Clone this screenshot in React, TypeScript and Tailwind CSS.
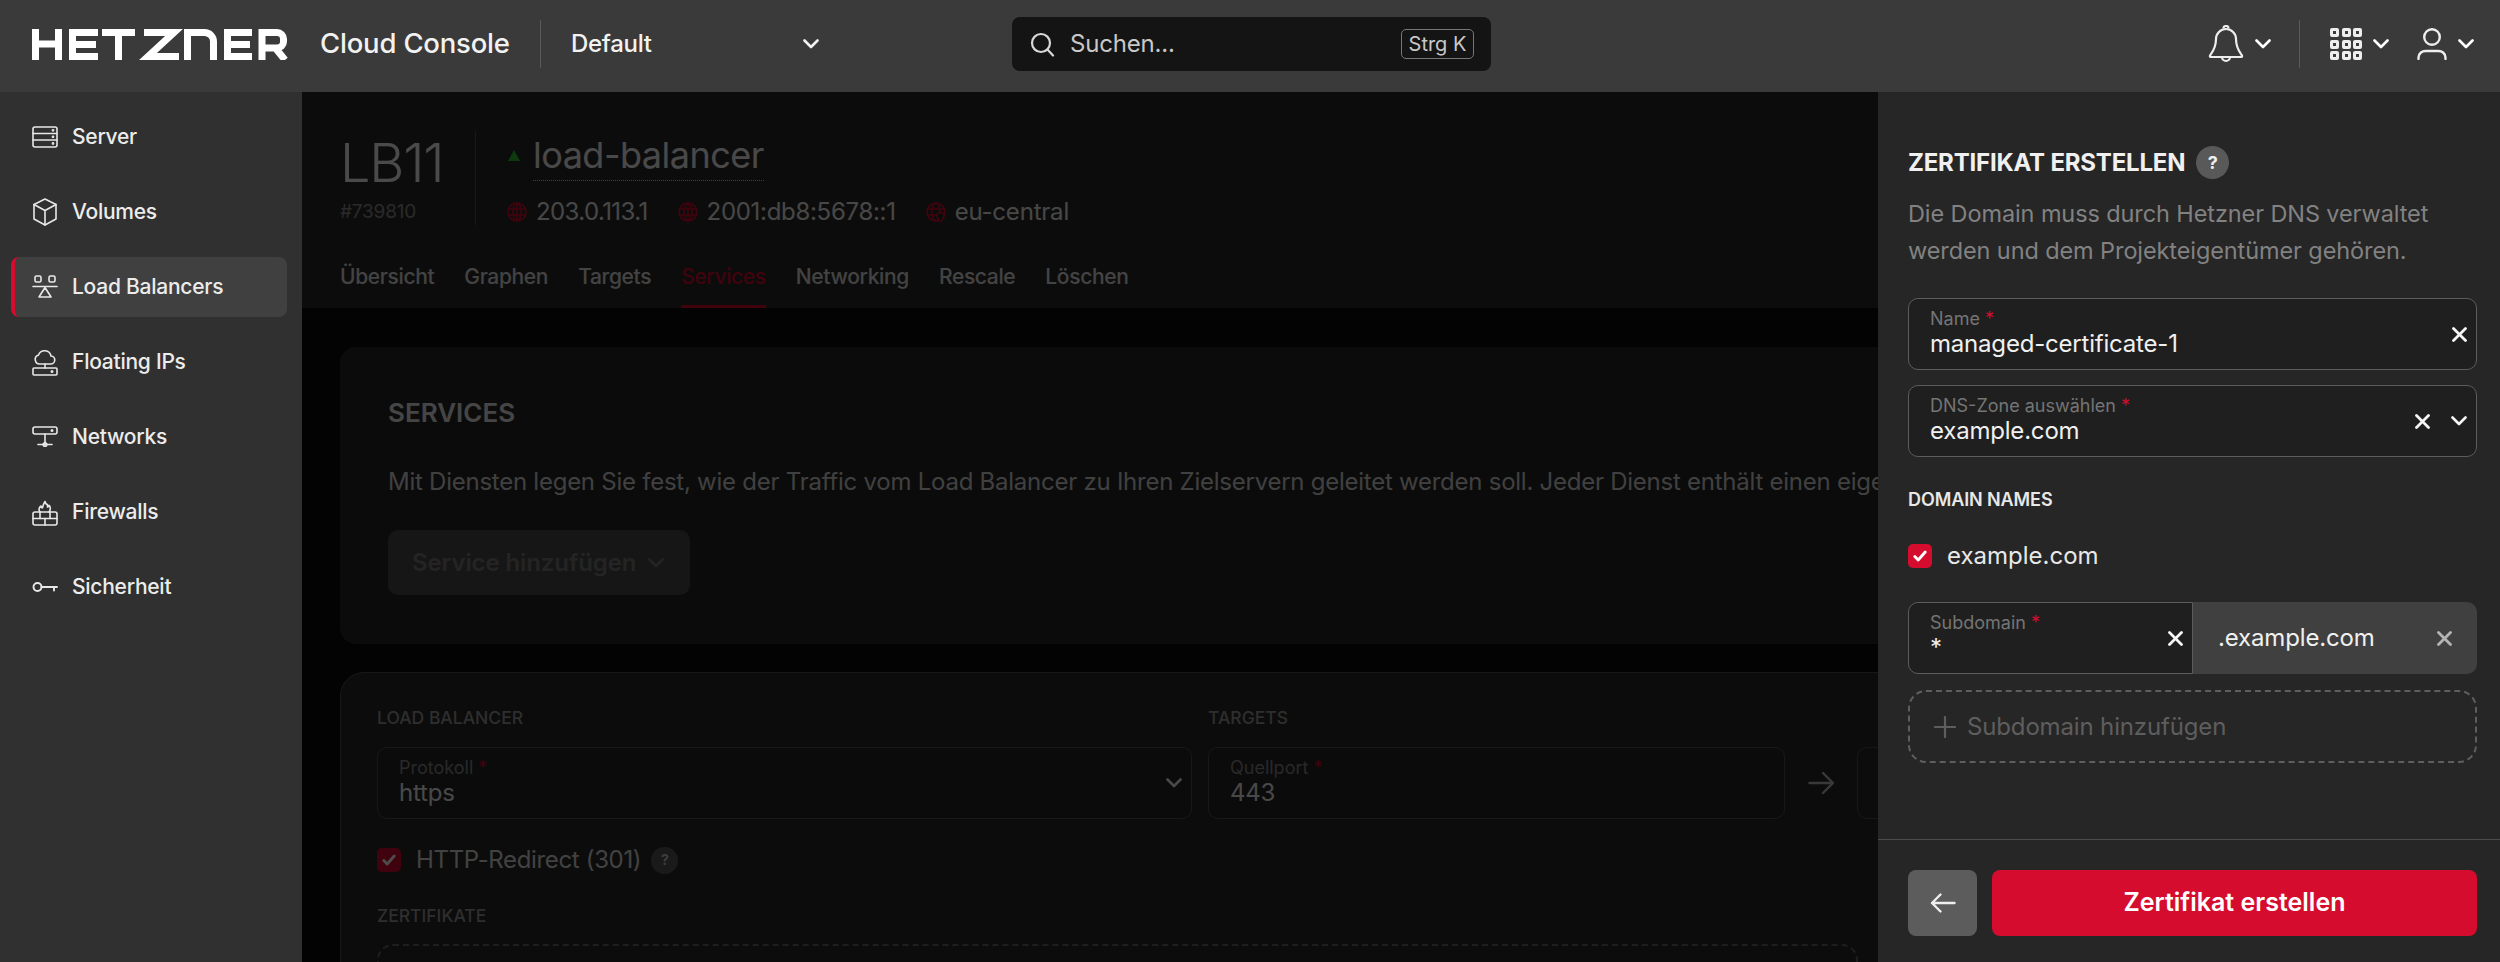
import type { ReactNode } from 'react';

const FONT = 'font-["Inter","Liberation_Sans",sans-serif]';

function Chevron({ className = '' }: { className?: string }) {
  return (
    <svg width="16" height="10" viewBox="0 0 16 10" fill="none" stroke="currentColor" strokeWidth="2.6" strokeLinecap="round" strokeLinejoin="round" className={className}>
      <polyline points="1.5,1.5 8,8 14.5,1.5" />
    </svg>
  );
}

function Cross({ className = '' }: { className?: string }) {
  return (
    <svg width="15" height="15" viewBox="0 0 15 15" fill="none" stroke="currentColor" strokeWidth="2.8" strokeLinecap="round" className={className}>
      <line x1="1.5" y1="1.5" x2="13.5" y2="13.5" />
      <line x1="13.5" y1="1.5" x2="1.5" y2="13.5" />
    </svg>
  );
}

function Check() {
  return (
    <svg width="14" height="12" viewBox="0 0 14 12" fill="none" stroke="currentColor" strokeWidth="2.8" strokeLinecap="round" strokeLinejoin="round">
      <polyline points="1.8,6.5 5.2,10 12.2,2" />
    </svg>
  );
}

function Globe({ pin = false }: { pin?: boolean }) {
  return (
    <svg width="20" height="20" viewBox="0 0 20 20" fill="none" stroke="#d50c2d" strokeWidth="1.6">
      <circle cx="10" cy="10" r="9" />
      <ellipse cx="10" cy="10" rx="4" ry="9" />
      <line x1="1" y1="7" x2="19" y2="7" />
      <line x1="1" y1="13" x2="19" y2="13" />
      {!pin && <line x1="10" y1="1" x2="10" y2="19" />}
      {pin && <path d="M14.5 20c-2-2.500-3.500-4-3.500-6a3.500 3.500 0 017 0c0 2-1.500 3.500-3.500 6z" fill="#262626" />}
    </svg>
  );
}

function NavIcon({ name }: { name: string }) {
  const common = { width: 26, height: 30, viewBox: '0 0 26 30', fill: 'none', stroke: '#e8e8e8', strokeWidth: 1.6, strokeLinejoin: 'round' as const, strokeLinecap: 'round' as const };
  if (name === 'server') {
    return (
      <svg {...common}>
        <rect x="1" y="5" width="24" height="20" rx="2" />
        <line x1="1" y1="11.500" x2="25" y2="11.500" />
        <line x1="1" y1="18" x2="25" y2="18" />
        <circle cx="21" cy="8.300" r=".6" />
        <circle cx="21" cy="14.800" r=".6" />
        <circle cx="21" cy="21.500" r=".6" />
      </svg>
    );
  }
  if (name === 'volume') {
    return (
      <svg {...common}>
        <path d="M13 2l11 5.500v14.500l-11 6-11-6V7.500z" />
        <path d="M2 7.500l11 6 11-6M13 13.500v14.500" />
      </svg>
    );
  }
  if (name === 'lb') {
    return (
      <svg {...common}>
        <rect x="3" y="4" width="6" height="6" rx="1.500" />
        <rect x="17" y="4" width="6" height="6" rx="1.500" />
        <line x1="1" y1="14.500" x2="25" y2="14.500" />
        <path d="M13 15.500l6 9.500H7z" />
      </svg>
    );
  }
  if (name === 'floating') {
    return (
      <svg {...common}>
        <path d="M8 17h10.500a4 4 0 00.500-8 6.500 6.500 0 00-12.500-1 4.600 4.600 0 001.500 9z" />
        <line x1="13" y1="17" x2="13" y2="21" />
        <rect x="1" y="21" width="24" height="7" rx="1" />
        <circle cx="20" cy="24.500" r=".7" />
      </svg>
    );
  }
  if (name === 'network') {
    return (
      <svg {...common}>
        <rect x="1" y="5" width="24" height="7" rx="2" />
        <circle cx="20" cy="8.500" r=".7" />
        <line x1="13" y1="12" x2="13" y2="23" />
        <line x1="6" y1="22.500" x2="20" y2="22.500" />
        <circle cx="13" cy="22.500" r="1.800" />
      </svg>
    );
  }
  if (name === 'firewall') {
    return (
      <svg {...common}>
        <path d="M8 15c-2-2.500-.5-5 1-6 0 1 .8 1.800 1.500 1.800C11 8.500 12 6 13 4.500c.5 2 1.500 3 2.500 3 .2 1 .2 1.800 0 2.500 1-.5 1.500-1 1.800-1.500 1.200 1.800 1.200 4.500-.3 6.500" />
        <rect x="1" y="15" width="24" height="13" rx="2" />
        <line x1="1" y1="21.500" x2="25" y2="21.500" />
        <line x1="13" y1="21.500" x2="13" y2="28" />
        <line x1="8" y1="15" x2="8" y2="21.500" />
        <line x1="18" y1="15" x2="18" y2="21.500" />
      </svg>
    );
  }
  return (
    <svg {...common}>
      <circle cx="5.500" cy="15" r="4" strokeWidth="1.900" />
      <path d="M9.500 15H25M22 15v3.500" strokeWidth="1.900" />
    </svg>
  );
}

function Logo() {
  return (
    <svg width="257" height="31" viewBox="0 0 257 31" fill="none" stroke="#ffffff" strokeWidth="7">
      <path d="M3.500 0v31M26.500 0v31M3.500 15h23" />
      <path d="M66 3.500H40.500v24H66M40.500 15.500H64" />
      <path d="M70 3.500h33M86.500 3.500V31" />
      <path d="M112 3.500h30l-26 24h31" />
      <path d="M155.500 31V3.500h17a9 9 0 019 9V31" />
      <path d="M220 3.500h-24.500v24H220M195.500 15.500H218" />
      <path d="M230 31V3.500h15a6.500 6.500 0 016.500 6.500v2.500a6.500 6.500 0 01-6.500 6.500H230M243 18.500l10 12.500" />
    </svg>
  );
}

function Field({ label, value, tone = 'bright', trailing, className = '' }: { label: string; value: string; tone?: 'bright' | 'dim'; trailing?: ReactNode; className?: string }) {
  return (
    <div className={`relative h-[72px] pl-[21px] pt-[9px] border ${tone === 'bright' ? 'bg-[#1f1f1f] border-[#5c5c5c]' : 'bg-[#262626] border-[#505050]'} ${className}`}>
      <div className={`text-[18px] leading-[22px] ${tone === 'bright' ? 'text-[#757575]' : 'text-[#8a8a8a]'}`}>
        {label} <span className="text-[#d50c2d]">*</span>
      </div>
      <div className="text-[24px] leading-[27px] tracking-[-0.2px] text-[#f0f0f0]">{value}</div>
      {trailing && <div className="absolute right-[9px] top-0 h-full flex items-center gap-[21px] text-[#f5f5f5]">{trailing}</div>}
    </div>
  );
}

function Checkbox({ tone }: { tone: string }) {
  return <span className={`w-[24px] h-[24px] rounded-[5px] ${tone} flex items-center justify-center text-white`}><Check /></span>;
}

const NAV = [
  { id: 'server', label: 'Server' },
  { id: 'volume', label: 'Volumes' },
  { id: 'lb', label: 'Load Balancers', active: true },
  { id: 'floating', label: 'Floating IPs' },
  { id: 'network', label: 'Networks' },
  { id: 'firewall', label: 'Firewalls' },
  { id: 'key', label: 'Sicherheit' },
];

const TABS = ['Übersicht', 'Graphen', 'Targets', 'Services', 'Networking', 'Rescale', 'Löschen'];

export default function App() {
  return (
    <div className={`${FONT} h-screen w-full flex flex-col overflow-hidden bg-[#262626]`}>
      {/* Top bar */}
      <header className="h-[92px] shrink-0 bg-[#3a3a3a] flex items-center text-white pl-[32px] pb-[4px]">
        <Logo />
        <span className="ml-[31px] text-[27.500px] tracking-[-0.2px] font-medium text-[#f2f2f2] w-[220px]">Cloud Console</span>
        <span className="w-px h-[48px] bg-[#5a5a5a]" />
        <div className="ml-[30px] w-[248px] flex items-center justify-between text-[24px] tracking-[-0.3px] font-medium text-[#f2f2f2]">
          <span>Default</span>
          <Chevron />
        </div>
        <div className="ml-[193px] w-[479px] h-[54px] bg-[#141414] rounded-[8px] flex items-center pl-[18px] pr-[17px]">
          <svg width="25" height="25" viewBox="0 0 25 25" fill="none" stroke="#d8d8d8" strokeWidth="2.200" strokeLinecap="round">
            <circle cx="11" cy="11" r="9" />
            <line x1="17.500" y1="17.500" x2="23" y2="23.500" />
          </svg>
          <span className="ml-[15px] text-[24px] tracking-[-0.2px] text-[#c8c8c8] flex-1">Suchen...</span>
          <span className="h-[30px] w-[73px] border border-[#777] rounded-[5px] text-[20px] text-[#c8c8c8] flex items-center justify-center">Strg K</span>
        </div>
        <div className="ml-auto flex items-center pr-[26px]">
          <svg width="36" height="38" viewBox="0 0 36 38" fill="none" stroke="#eeeeee" strokeWidth="2.200" strokeLinejoin="round">
            <path d="M18 4a10 10 0 00-10 10c0 9-3.500 13-6 16.500a1 1 0 001 1.500h30a1 1 0 001-1.500C31.500 27 28 23 28 14A10 10 0 0018 4z" />
            <path d="M15.500 3.500a2.500 2.500 0 015 0M14 32a4 4 0 008 0" />
          </svg>
          <Chevron className="ml-[11px]" />
          <span className="ml-[28px] w-px h-[48px] bg-[#5a5a5a]" />
          <div className="ml-[30px] grid grid-cols-3 gap-[2.500px]">
            {Array.from({ length: 9 }).map((_, i) => (
              <span key={i} className="w-[9px] h-[9px] rounded-[2px] border-[3px] border-[#eeeeee] bg-[#3a3a3a]" />
            ))}
          </div>
          <Chevron className="ml-[11px]" />
          <svg className="ml-[28px]" width="30" height="32" viewBox="0 0 30 32" fill="none" stroke="#eeeeee" strokeWidth="2.400" strokeLinecap="round">
            <circle cx="15" cy="9" r="7.800" />
            <path d="M1.500 31v-1.500c0-4 3.500-6.500 7-6.500h13c3.500 0 7 2.500 7 6.500V31" />
          </svg>
          <Chevron className="ml-[11px]" />
        </div>
      </header>

      <div className="flex-1 flex min-h-0">
        {/* Sidebar */}
        <aside className="w-[302px] shrink-0 bg-[#303030] pt-[15px] pl-[11px] pr-[15px] flex flex-col gap-[15px]">
          {NAV.map((item) => (
            <div
              key={item.id}
              className={`h-[60px] rounded-[8px] border-l-[4px] pl-[17px] flex items-center gap-[14px] text-[21px] tracking-[-0.25px] font-medium text-[#ececec] ${item.active ? 'bg-[#404040] border-[#d50c2d]' : 'border-transparent'}`}
            >
              <NavIcon name={item.id} />
              <span>{item.label}</span>
            </div>
          ))}
        </aside>

        {/* Page behind the dimmed overlay */}
        <main className="relative flex-1 min-w-0 overflow-hidden bg-[#0b0b0b] text-white">
          <div className="h-[216px] bg-[#2b2b2b] pl-[38px] flex flex-col">
            <div className="flex mt-[39px]">
              <div className="w-[135px] shrink-0">
                <div className="text-[54px] leading-[62px] tracking-[-1.2px] font-light text-[#f8f8f8] mt-[1px]">LB11</div>
                <div className="text-[19px] leading-[24px] mt-[6px] tracking-[-0.2px] text-[#8d8d8d]">#739810</div>
              </div>
              <div className="w-px h-[94px] bg-[#555]" />
              <div className="pl-[31px]">
                <div className="flex items-center h-[49px]">
                  <span className="w-0 h-0 border-l-[6px] border-r-[6px] border-b-[11px] border-l-transparent border-r-transparent border-b-[#2bc42b] ml-[1px]" />
                  <span className="ml-[13px] text-[36px] leading-[49px] tracking-[-0.5px] border-b border-dotted border-[#d8d8d8] text-[#f4f4f4]">load-balancer</span>
                </div>
                <div className="flex items-center mt-[19px] text-[24px] leading-[26px] text-[#eeeeee]">
                  <Globe />
                  <span className="ml-[9px] tracking-[-0.6px]">203.0.113.1</span>
                  <span className="ml-[30px]"><Globe /></span>
                  <span className="ml-[9px] tracking-[-0.3px]">2001:db8:5678::1</span>
                  <span className="ml-[30px]"><Globe pin /></span>
                  <span className="ml-[9px] tracking-[-0.2px]">eu-central</span>
                </div>
              </div>
            </div>
            <div className="mt-auto flex gap-[30px] text-[21px] tracking-[-0.35px] font-medium">
              {TABS.map((tab) => (
                <span key={tab} className={`h-[47px] border-b-[3px] ${tab === 'Services' ? 'text-[#d50c2d] border-[#d50c2d]' : 'text-[#e0e0e0] border-transparent'}`}>{tab}</span>
              ))}
            </div>
          </div>

          <div className="pt-[39px] pl-[38px]">
            <section className="w-[1700px] h-[297px] bg-[#262626] rounded-[16px] pl-[48px] pt-[48px]">
              <h2 className="text-[26px] leading-[36px] font-semibold text-[#e8e8e8]">SERVICES</h2>
              <p className="mt-[34px] text-[24px] leading-[34px] tracking-[-0.25px] text-[#d8d8d8] whitespace-nowrap">
                Mit Diensten legen Sie fest, wie der Traffic vom Load Balancer zu Ihren Zielservern geleitet werden soll. Jeder Dienst enthält einen eigenen Algorithmus.
              </p>
              <div className="mt-[31px] w-[302px] h-[65px] rounded-[10px] bg-[#4a4a4a] flex items-center pl-[24px] gap-[12px] text-[24px] tracking-[-0.1px] font-semibold text-[#7a7a7a]">
                Service hinzufügen
                <Chevron />
              </div>
            </section>

            <section className="mt-[28px] w-[1700px] h-[500px] bg-[#2b2b2b] border border-[#505050] rounded-[24px] pl-[36px] pt-[34px]">
              <div className="flex">
                <div className="w-[815px] shrink-0">
                  <div className="text-[17.500px] leading-[22px] font-medium text-[#9a9a9a]">LOAD BALANCER</div>
                  <Field label="Protokoll" value="https" tone="dim" className="mt-[18px] rounded-[10px]" trailing={<Chevron />} />
                </div>
                <div className="ml-[16px]">
                  <div className="text-[17.500px] leading-[22px] font-medium text-[#9a9a9a]">TARGETS</div>
                  <div className="mt-[18px] flex items-center">
                    <Field label="Quellport" value="443" tone="dim" className="w-[577px] rounded-[10px]" />
                    <svg className="ml-[23px]" width="26" height="24" viewBox="0 0 26 24" fill="none" stroke="#c0c0c0" strokeWidth="2.400" strokeLinecap="round" strokeLinejoin="round">
                      <path d="M1.500 12h23M15 2l10 10-10 10" />
                    </svg>
                    <div className="ml-[23px] w-[200px] h-[72px] rounded-[10px] border border-[#505050]" />
                  </div>
                </div>
              </div>
              <div className="mt-[27px] flex items-center text-[24px] leading-[28px] tracking-[-0.35px] text-[#dcdcdc]">
                <Checkbox tone="bg-[#d50c2d]" />
                <span className="ml-[15px]">HTTP-Redirect (301)</span>
                <span className="ml-[10px] w-[27px] h-[27px] rounded-full bg-[#595959] flex items-center justify-center text-[14px] font-bold text-[#d0d0d0]">?</span>
              </div>
              <div className="mt-[31px] text-[17.500px] leading-[22px] font-medium text-[#9a9a9a]">ZERTIFIKATE</div>
              <div className="mt-[17px] w-[1481px] h-[120px] rounded-[16px] border-2 border-dashed border-[#666]" />
            </section>
          </div>

          <div className="absolute inset-0 bg-black/70" />
        </main>

        {/* Drawer */}
        <aside className="w-[622px] shrink-0 bg-[#262626] flex flex-col text-white">
          <div className="flex-1 px-[30px] pt-[54px] pr-[23px]">
            <div className="flex items-center h-[33px]">
              <h2 className="text-[24px] font-bold tracking-[-0.2px] text-[#f0f0f0] leading-[33px]">ZERTIFIKAT ERSTELLEN</h2>
              <span className="ml-[11px] w-[33px] h-[33px] rounded-full bg-[#595959] flex items-center justify-center text-[18px] font-bold text-[#eeeeee]">?</span>
            </div>
            <p className="mt-[16px] text-[23.500px] leading-[37px] tracking-[-0.1px] text-[#828282]">
              Die Domain muss durch Hetzner DNS verwaltet<br />werden und dem Projekteigentümer gehören.
            </p>
            <Field label="Name" value="managed-certificate-1" className="mt-[29px] rounded-[10px]" trailing={<Cross />} />
            <Field
              label="DNS-Zone auswählen"
              value="example.com"
              className="mt-[15px] rounded-[10px]"
              trailing={<><Cross /><Chevron /></>}
            />
            <div className="mt-[32px] text-[18px] leading-[22px] font-semibold tracking-[-0.1px] text-[#e8e8e8]">DOMAIN NAMES</div>
            <div className="mt-[33px] flex items-center h-[24px] text-[24px] text-[#e8e8e8]">
              <Checkbox tone="bg-[#d50c2d]" />
              <span className="ml-[15px]">example.com</span>
            </div>
            <div className="mt-[34px] flex h-[72px]">
              <Field label="Subdomain" value="*" className="w-[285px] rounded-l-[10px]" trailing={<Cross />} />
              <div className="flex-1 bg-[#404040] rounded-r-[10px] pl-[25px] pr-[25px] flex items-center justify-between text-[24px] tracking-[-0.15px] text-[#f0f0f0]">
                <span>.example.com</span>
                <Cross className="text-[#b4b4b4]" />
              </div>
            </div>
            <div className="mt-[16px] h-[73px] rounded-[18px] border-2 border-dashed border-[#5e5e5e] pl-[24px] flex items-center text-[24px] tracking-[-0.15px] text-[#5e5e5e]">
              <svg width="22" height="22" viewBox="0 0 22 22" fill="none" stroke="currentColor" strokeWidth="2.200" strokeLinecap="round">
                <path d="M11 1v20M1 11h20" />
              </svg>
              <span className="ml-[11px]">Subdomain hinzufügen</span>
            </div>
          </div>
          <div className="h-[123px] shrink-0 border-t border-[#4c4c4c] pt-[30px] pl-[30px] pr-[23px] flex gap-[15px]">
            <button className="w-[69px] h-[66px] rounded-[8px] bg-[#5c5c5c] flex items-center justify-center text-[#eeeeee]">
              <svg width="26" height="20" viewBox="0 0 26 20" fill="none" stroke="currentColor" strokeWidth="2.400" strokeLinecap="round" strokeLinejoin="round">
                <path d="M24.500 10H2M10.500 1.500L2 10l8.500 8.500" />
              </svg>
            </button>
            <button className="flex-1 h-[66px] rounded-[8px] bg-[#d50c2d] text-[25px] font-semibold text-white">Zertifikat erstellen</button>
          </div>
        </aside>
      </div>
    </div>
  );
}
